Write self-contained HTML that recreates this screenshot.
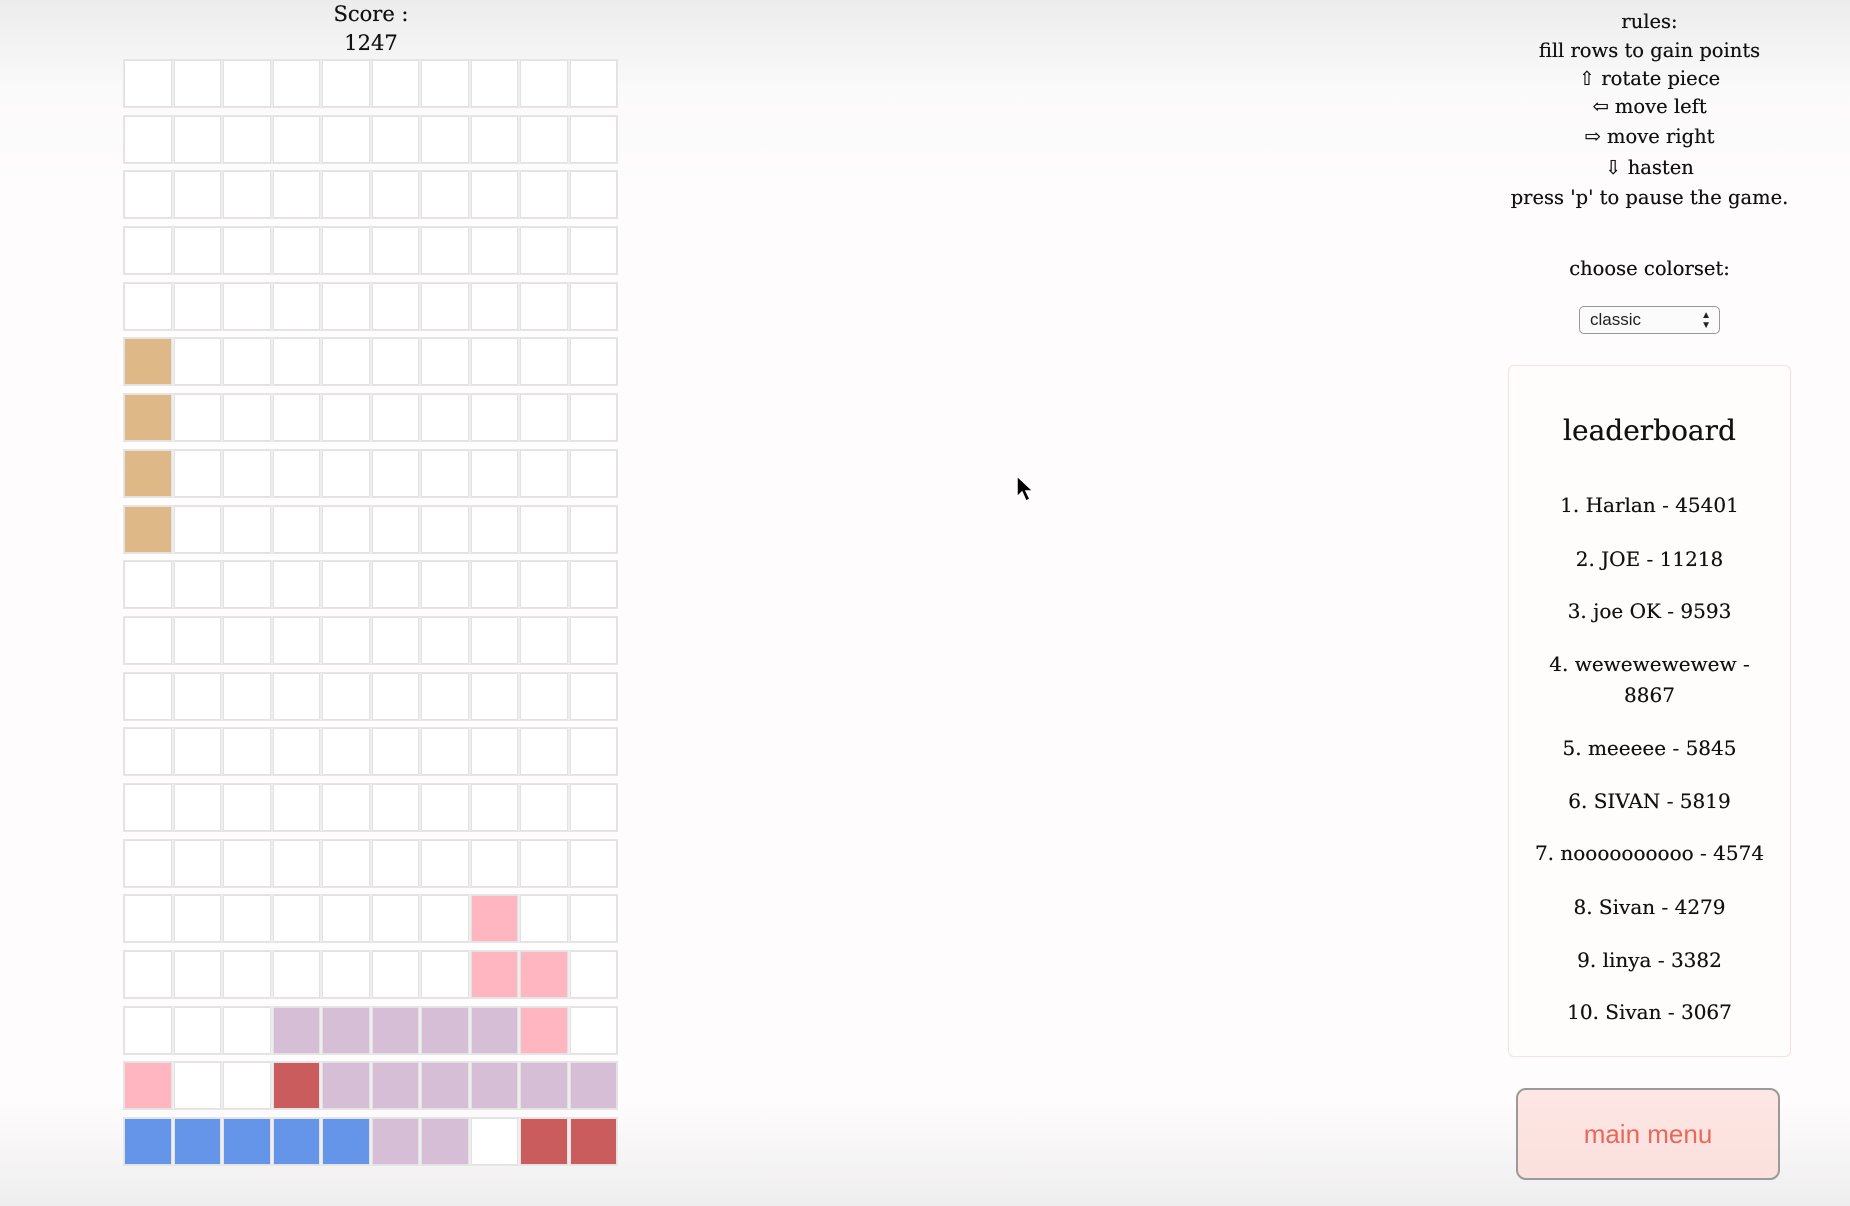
<!DOCTYPE html>
<html><head><meta charset="utf-8"><style>
html,body{margin:0;padding:0}
body{width:1850px;height:1206px;position:relative;overflow:hidden;font-family:"DejaVu Serif","Liberation Serif",serif;color:#111;
background:linear-gradient(to bottom,#ececec 0px,#fbfafa 90px,#fefcfc 200px,#fefcfc 1100px,#efeeee 1206px);}
.t{position:absolute;left:0;width:100%;text-align:center;white-space:nowrap;text-shadow:0 0 0.4px #111}
#grid{position:absolute;left:123px;top:59px;width:495px}
.r{display:flex;height:49px;margin-bottom:6.7px;background:#eee;padding:0;gap:2px;box-sizing:border-box;border:1px solid #e6e6e6}
.r div{flex:1;background:#fff;border:1px solid #e2e2e2}
.o{background:#deb887!important}.p{background:#ffb6c1!important}.v{background:#d6bfd6!important}.d{background:#cb5c5e!important}.b{background:#6595e8!important}
#right{position:absolute;left:1508px;top:0;width:283px;height:1206px}
.rl{font-size:19.5px}
#lb{position:absolute;left:1508px;top:365px;width:281px;height:690px;border:1px solid #fbdede;border-radius:6px;background:#fffcfc}
.e{font-size:20px}
</style></head><body>
<div class="t" style="left:221px;width:300px;top:2px;font-size:21px">Score :</div>
<div class="t" style="left:221px;width:300px;top:31px;font-size:21px">1247</div>
<div id="grid">
<div class="r"><div></div><div></div><div></div><div></div><div></div><div></div><div></div><div></div><div></div><div></div></div>
<div class="r"><div></div><div></div><div></div><div></div><div></div><div></div><div></div><div></div><div></div><div></div></div>
<div class="r"><div></div><div></div><div></div><div></div><div></div><div></div><div></div><div></div><div></div><div></div></div>
<div class="r"><div></div><div></div><div></div><div></div><div></div><div></div><div></div><div></div><div></div><div></div></div>
<div class="r"><div></div><div></div><div></div><div></div><div></div><div></div><div></div><div></div><div></div><div></div></div>
<div class="r"><div class="o"></div><div></div><div></div><div></div><div></div><div></div><div></div><div></div><div></div><div></div></div>
<div class="r"><div class="o"></div><div></div><div></div><div></div><div></div><div></div><div></div><div></div><div></div><div></div></div>
<div class="r"><div class="o"></div><div></div><div></div><div></div><div></div><div></div><div></div><div></div><div></div><div></div></div>
<div class="r"><div class="o"></div><div></div><div></div><div></div><div></div><div></div><div></div><div></div><div></div><div></div></div>
<div class="r"><div></div><div></div><div></div><div></div><div></div><div></div><div></div><div></div><div></div><div></div></div>
<div class="r"><div></div><div></div><div></div><div></div><div></div><div></div><div></div><div></div><div></div><div></div></div>
<div class="r"><div></div><div></div><div></div><div></div><div></div><div></div><div></div><div></div><div></div><div></div></div>
<div class="r"><div></div><div></div><div></div><div></div><div></div><div></div><div></div><div></div><div></div><div></div></div>
<div class="r"><div></div><div></div><div></div><div></div><div></div><div></div><div></div><div></div><div></div><div></div></div>
<div class="r"><div></div><div></div><div></div><div></div><div></div><div></div><div></div><div></div><div></div><div></div></div>
<div class="r"><div></div><div></div><div></div><div></div><div></div><div></div><div></div><div class="p"></div><div></div><div></div></div>
<div class="r"><div></div><div></div><div></div><div></div><div></div><div></div><div></div><div class="p"></div><div class="p"></div><div></div></div>
<div class="r"><div></div><div></div><div></div><div class="v"></div><div class="v"></div><div class="v"></div><div class="v"></div><div class="v"></div><div class="p"></div><div></div></div>
<div class="r"><div class="p"></div><div></div><div></div><div class="d"></div><div class="v"></div><div class="v"></div><div class="v"></div><div class="v"></div><div class="v"></div><div class="v"></div></div>
<div class="r"><div class="b"></div><div class="b"></div><div class="b"></div><div class="b"></div><div class="b"></div><div class="v"></div><div class="v"></div><div></div><div class="d"></div><div class="d"></div></div>
</div>

<div id="right">
<div class="t rl" style="top:10px">rules:</div>
<div class="t rl" style="top:39px">fill rows to gain points</div>
<div class="t rl" style="top:67px">⇧ rotate piece</div>
<div class="t rl" style="top:95px">⇦ move left</div>
<div class="t rl" style="top:125px">⇨ move right</div>
<div class="t rl" style="top:156px">⇩ hasten</div>
<div class="t rl" style="top:186px">press 'p' to pause the game.</div>
<div class="t rl" style="top:257px">choose colorset:</div>
<div style="position:absolute;left:71px;top:306px;width:141px;height:28px;border:1px solid #999;border-radius:5px;background:#fbfbfb;box-sizing:border-box;font-family:'Liberation Sans',sans-serif;font-size:17px;line-height:26px;padding-left:10px;color:#222">classic<span style="position:absolute;right:8px;font-size:10px;line-height:10px;top:4px">▲<br>▼</span></div>
</div>

<div id="lb">
<div class="t" style="top:48px;font-size:28px">leaderboard</div>
<div class="t e" style="top:127px">1. Harlan - 45401</div>
<div class="t e" style="top:181px">2. JOE - 11218</div>
<div class="t e" style="top:233px">3. joe OK - 9593</div>
<div class="t e" style="top:286px">4. wewewewewew -</div>
<div class="t e" style="top:317px">8867</div>
<div class="t e" style="top:370px">5. meeeee - 5845</div>
<div class="t e" style="top:423px">6. SIVAN - 5819</div>
<div class="t e" style="top:475px">7. noooooooooo - 4574</div>
<div class="t e" style="top:529px">8. Sivan - 4279</div>
<div class="t e" style="top:582px">9. linya - 3382</div>
<div class="t e" style="top:634px">10. Sivan - 3067</div>
</div>

<div style="position:absolute;left:1516px;top:1088px;width:264px;height:92px;box-sizing:border-box;border:2px solid #9a9a9a;border-radius:10px;background:linear-gradient(#fde6e4,#fbe0dd);color:#e8685a;font-family:'Liberation Sans',sans-serif;font-size:26px;text-align:center;line-height:88px">main menu</div>

<svg style="position:absolute;left:1014px;top:474px" width="24" height="30" viewBox="0 0 24 30"><path d="M3 2 L3 23 L8 18 L12 27 L16 25 L12 17 L19 17 Z" fill="#000" stroke="#fff" stroke-width="1.5"/></svg>
</body></html>
